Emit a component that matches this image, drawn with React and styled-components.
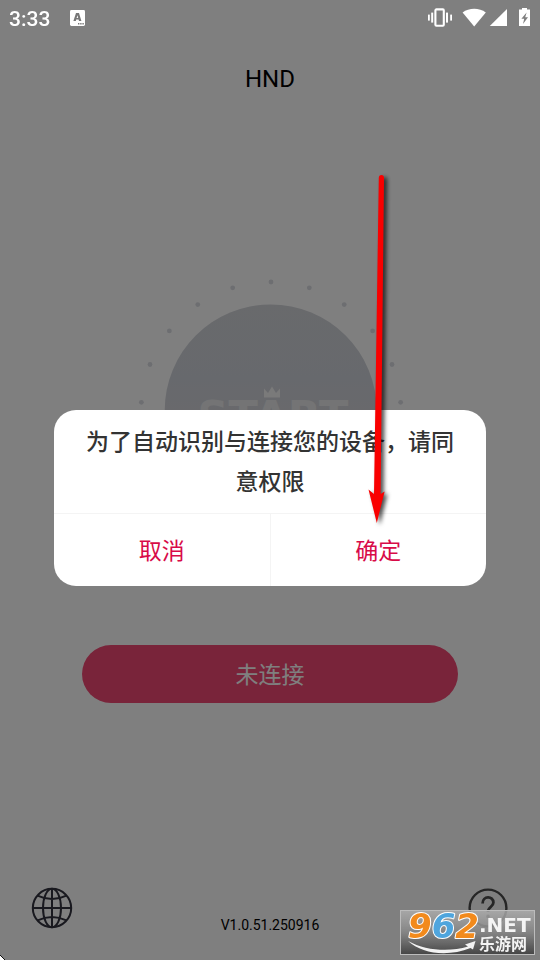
import React from 'react';
import styled, { createGlobalStyle } from 'styled-components';

const DOT_COUNT = 21;

function StatusIcons() {
  return (
    <svg width="104" height="20" viewBox="0 0 104 20" fill="#fff" aria-hidden="true">
      <rect x="7.4" y="1.4" width="8.4" height="16.4" rx="1" fill="none" stroke="#fff" strokeWidth="2.1" />
      <rect x="3.2" y="4.6" width="2" height="10" />
      <rect x="0" y="6.6" width="1.8" height="6" />
      <rect x="18" y="4.6" width="2" height="10" />
      <rect x="22.2" y="6.6" width="1.8" height="6" />
      <path d="M34.6 4.6 C41 -0.4 51.4 -0.4 57.8 4.6 L46.2 18.6 Z" />
      <path d="M61.8 18 L79 1 V18 Z" />
      <path
        fillRule="evenodd"
        d="M94 -0.5 H99 V1.5 H102 V18 H91 V1.5 H94 Z M98.6 4.5 L93.4 10.7 H96.2 L95 16 L100 9.2 H97.2 Z"
      />
    </svg>
  );
}

function KeyboardIcon() {
  return (
    <svg width="15" height="16" viewBox="0 0 15 16" aria-hidden="true">
      <rect width="15" height="16" rx="1.4" fill="#fff" />
      <path
        fillRule="evenodd"
        fill="#777"
        d="M6 3 H9 L11.4 11 H9 L8.6 9.6 H6.2 L5.8 11 H3.4 Z M7.4 5.2 L6.6 8 H8.2 Z"
      />
      <path d="M8 13.8 H14" stroke="#777" strokeWidth="1.4" strokeDasharray="1.4 0.8" />
    </svg>
  );
}

function StartDial() {
  const dots = Array.from({ length: DOT_COUNT }, (_, i) => {
    const angle = (i * 2 * Math.PI) / DOT_COUNT;
    return { x: 141 + 130 * Math.sin(angle), y: 140 - 130 * Math.cos(angle) };
  });

  return (
    <svg width="280" height="280" viewBox="0 0 280 280">
      <defs>
        <linearGradient id="dialFill" x1="0" y1="0" x2="0" y2="1">
          <stop offset="0" stopColor="#d2d4d9" />
          <stop offset="0.35" stopColor="#cfd3da" />
          <stop offset="0.5" stopColor="#d2d3d9" />
          <stop offset="1" stopColor="#d6d8de" />
        </linearGradient>
      </defs>
      {dots.map((dot, i) => (
        <circle key={i} cx={dot.x} cy={dot.y} r="2.4" fill="#dadce2" />
      ))}
      <circle cx="140.7" cy="138.5" r="106" fill="url(#dialFill)" />
      <path d="M134 125.5 V116.5 L138 121 L142 114.5 L146 121 L150 116.5 V125.5 Z" fill="#f4f4f4" />
      <DialText x="143" y="159" textAnchor="middle">
        START
      </DialText>
    </svg>
  );
}

function GlobeIcon() {
  return (
    <svg width="42" height="42" viewBox="0 0 42 42" fill="none" stroke="#33333f" strokeWidth="2">
      <circle cx="21" cy="21" r="19.2" />
      <ellipse cx="21" cy="21" rx="9" ry="19.2" />
      <path d="M21 1.8 V40.2 M1.8 21 H40.2 M6.6 8.6 Q21 15.6 35.4 8.6 M6.6 33.4 Q21 26.4 35.4 33.4" />
    </svg>
  );
}

function HelpIcon() {
  return (
    <svg width="42" height="42" viewBox="0 0 42 42" fill="none" stroke="#4c4c4c" strokeWidth="2.4">
      <circle cx="21" cy="21" r="18.4" />
      <path d="M15.6 16.4 C15.6 8.6 26.4 8.6 26.4 15.6 C26.4 20 21 19.6 21 25" strokeWidth="2.8" />
      <circle cx="21" cy="29.4" r="1.8" fill="#4c4c4c" stroke="none" />
    </svg>
  );
}

function SiteLogo() {
  return (
    <LogoSvg width="135" height="45" viewBox="0 0 135 45" role="img" aria-label="962.NET">
      <defs>
        <linearGradient id="logoPlate" x1="0" y1="0" x2="0" y2="1">
          <stop offset="0" stopColor="#b0b0b0" stopOpacity="0.8" />
          <stop offset="0.5" stopColor="#858585" stopOpacity="0.9" />
          <stop offset="1" stopColor="#454545" />
        </linearGradient>
      </defs>
      <rect x="0.5" y="0.5" width="134" height="44" fill="url(#logoPlate)" stroke="#bcbcbc" />
      <LogoDigits x="8" y="28">
        <tspan fill="#f28a1c">9</tspan>
        <tspan fill="#4fa5dd">6</tspan>
        <tspan fill="#f28a1c">2</tspan>
      </LogoDigits>
      <path d="M8 31 C26 41 50 42 68 36.5 L65 34.5 L75.5 31 L73 39.5 L70.5 38 C48 47 22 44 8 31 Z" fill="#f2f2f2" />
      <LogoDomain x="79" y="22">
        .NET
      </LogoDomain>
      <LogoName x="79" y="40">
        乐游网
      </LogoName>
    </LogoSvg>
  );
}

function Pointer() {
  return (
    <PointerLayer width="30" height="360" viewBox="0 0 30 360" aria-hidden="true">
      <path
        d="M13.8 8 Q13.8 5 16.5 5 Q19 5 19 8 L15.6 324 L19.6 321.5 L11.8 353 L3.5 319.5 L9 324 Z"
        fill="#f90000"
      />
    </PointerLayer>
  );
}

export default function App() {
  return (
    <>
      <GlobalStyle />
      <StatusBar>
        <Clock>3:33</Clock>
        <KeyboardIcon />
        <StatusRight>
          <StatusIcons />
        </StatusRight>
      </StatusBar>
      <Page>
        <Title>HND</Title>
        <DialButton aria-label="START">
          <StartDial />
        </DialButton>
        <ConnectRow>
          <ConnectButton>未连接</ConnectButton>
        </ConnectRow>
        <Footer>
          <IconButton aria-label="语言">
            <GlobeIcon />
          </IconButton>
          <Version>V1.0.51.250916</Version>
          <IconButton aria-label="帮助">
            <HelpIcon />
          </IconButton>
        </Footer>
      </Page>
      <Overlay>
        <Dialog role="dialog" aria-modal="true" aria-labelledby="permission-text">
          <Message id="permission-text">为了自动识别与连接您的设备，请同意权限</Message>
          <Actions>
            <ActionButton>取消</ActionButton>
            <ActionButton>确定</ActionButton>
          </Actions>
          <Pointer />
        </Dialog>
      </Overlay>
      <LogoCorner>
        <SiteLogo />
      </LogoCorner>
      <ScreenCorner width="5" height="5" viewBox="0 0 5 5" aria-hidden="true">
        <path d="M0 0 L5 5 H0 Z" fill="#fff" />
        <path d="M0 0 L5 5" stroke="#111" />
      </ScreenCorner>
    </>
  );
}

const GlobalStyle = createGlobalStyle`
  * {
    box-sizing: border-box;
  }

  body {
    margin: 0;
    background: #fff;
    font-family: Roboto, 'Noto Sans CJK SC', sans-serif;
  }

  button {
    padding: 0;
    border: 0;
    background: none;
    font-family: inherit;
    cursor: pointer;
  }

  svg {
    display: block;
  }
`;

const StatusBar = styled.div`
  position: fixed;
  z-index: 2;
  top: 0;
  left: 0;
  right: 0;
  display: flex;
  align-items: center;
  height: 36px;
  padding: 0 8px 0 9px;
`;

const Clock = styled.span`
  width: 61px;
  padding-top: 2px;
  color: #fff;
  font-size: 21px;
  font-weight: 500;
`;

const StatusRight = styled.div`
  margin-left: auto;
`;

const Page = styled.main`
  display: flex;
  flex-direction: column;
  min-height: 100vh;
  padding: 36px 0 24px;
`;

const Title = styled.h1`
  margin: 0;
  color: #000;
  font-size: 24px;
  font-weight: 400;
  line-height: 86px;
  text-align: center;
`;

const DialButton = styled.button`
  align-self: center;
  margin-top: 150px;
`;

const DialText = styled.text`
  fill: #e8e9eb;
  font-family: 'DejaVu Sans', sans-serif;
  font-size: 43px;
  font-weight: 700;
`;

const ConnectRow = styled.div`
  display: flex;
  margin-top: 93px;
  padding: 0 82px;
`;

const ConnectButton = styled.button`
  flex: 1;
  height: 58px;
  padding-bottom: 2px;
  border-radius: 29px;
  background: #f24874;
  color: #fff;
  font-size: 23px;
`;

const Footer = styled.footer`
  display: flex;
  justify-content: space-between;
  height: 49px;
  margin-top: auto;
  padding: 0 31px;
`;

const IconButton = styled.button`
  align-self: flex-start;
`;

const Version = styled.span`
  align-self: flex-end;
  color: #000;
  font-size: 14px;
  line-height: 22px;
`;

const Overlay = styled.div`
  position: fixed;
  z-index: 1;
  inset: 0;
  display: flex;
  align-items: center;
  justify-content: center;
  padding-top: 36px;
  background: rgba(0, 0, 0, 0.5);
`;

const Dialog = styled.section`
  position: relative;
  width: 80%;
  border-radius: 22px;
  background: #fff;
`;

const Message = styled.p`
  margin: 0;
  padding: 13px 28px 10px;
  color: #333;
  font-size: 23px;
  font-weight: 500;
  line-height: 40px;
  text-align: center;
`;

const Actions = styled.div`
  display: flex;
  border-top: 1px solid #f4f4f4;
`;

const ActionButton = styled.button`
  flex: 1;
  height: 72px;
  padding-bottom: 2px;
  color: #d80b48;
  font-size: 23px;

  & + & {
    border-left: 1px solid #f4f4f4;
  }
`;

const PointerLayer = styled.svg`
  position: absolute;
  right: 91px;
  bottom: 56px;
  overflow: visible;
  pointer-events: none;
  filter: drop-shadow(3px 2px 2px rgba(0, 0, 0, 0.7));
`;

const LogoCorner = styled.div`
  position: fixed;
  z-index: 3;
  right: 5px;
  bottom: 5px;
`;

const LogoSvg = styled.svg`
  overflow: visible;
`;

const LogoDigits = styled.text`
  stroke: #fff;
  stroke-width: 2px;
  stroke-linejoin: round;
  paint-order: stroke;
  font-family: 'DejaVu Sans', sans-serif;
  font-size: 34px;
  font-style: oblique;
  font-weight: 700;
`;

const LogoDomain = styled.text`
  fill: #f4f4f4;
  font-family: 'DejaVu Sans', sans-serif;
  font-size: 20px;
  font-weight: 700;
`;

const LogoName = styled.text`
  fill: #f4f4f4;
  font-family: 'Noto Sans CJK SC', sans-serif;
  font-size: 16px;
  font-weight: 700;
`;

const ScreenCorner = styled.svg`
  position: fixed;
  z-index: 3;
  left: 0;
  bottom: 0;
`;
